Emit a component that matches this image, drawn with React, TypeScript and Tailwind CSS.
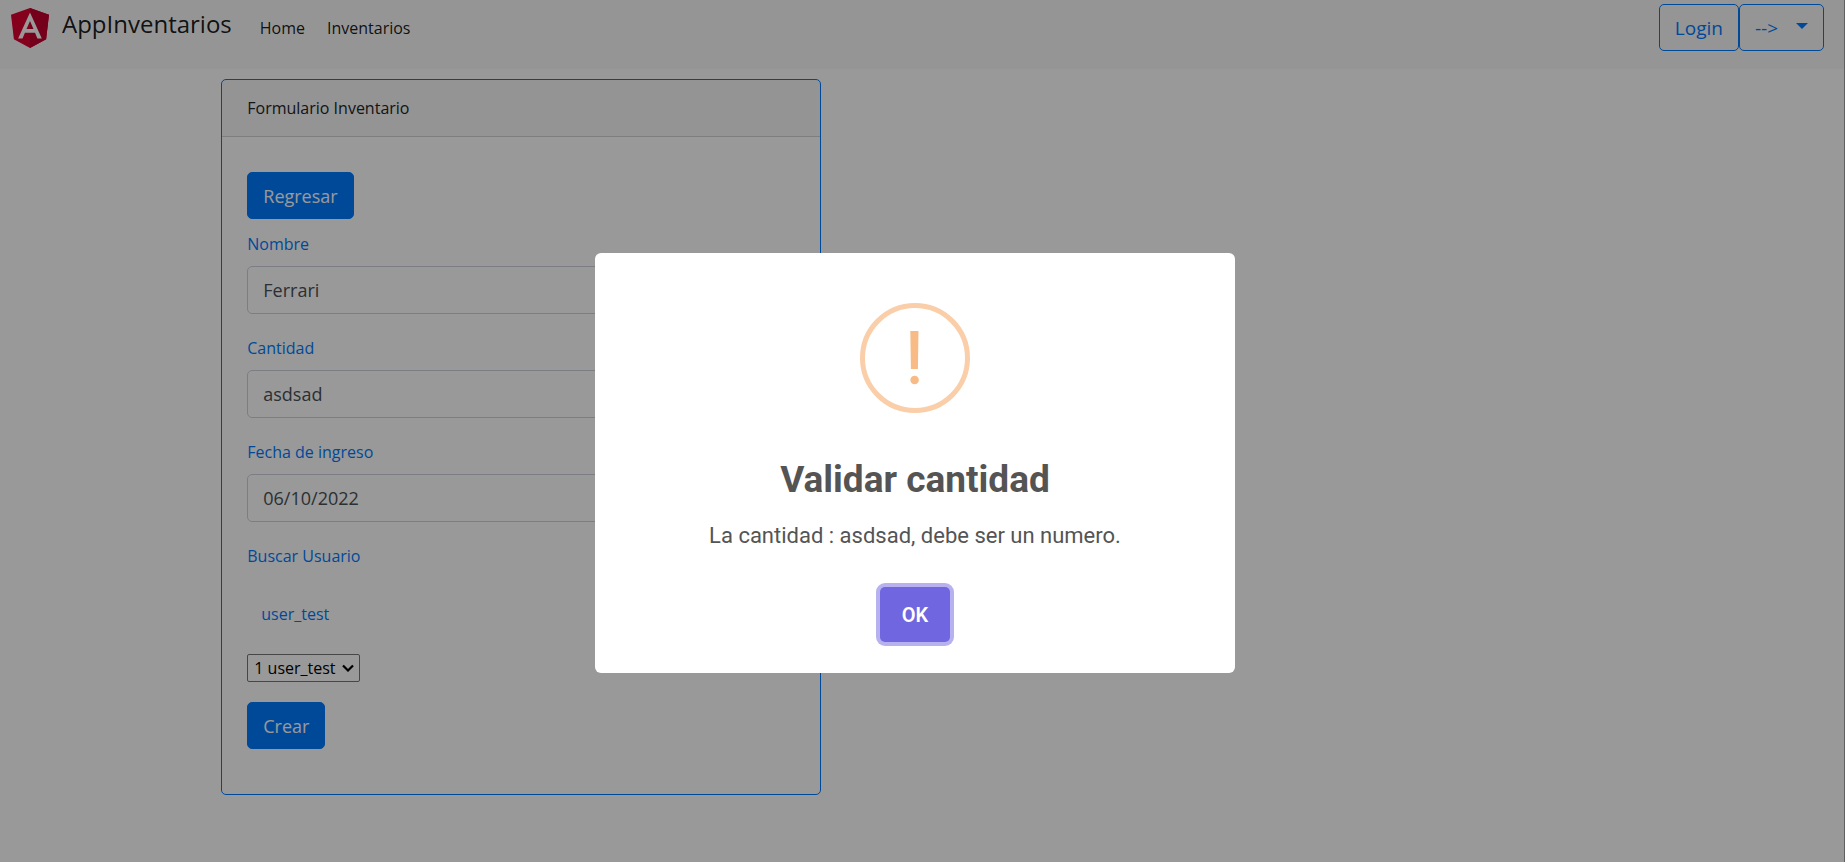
import { useState } from "react";

const buttonBase = "rounded-[5px] border border-[#007bff] px-[15px] pt-px leading-[44px]";
const solidButton = `${buttonBase} block bg-[#007bff] text-[18px] text-white`;
const outlineButton = `${buttonBase} text-[19px] text-[#007bff]`;
const labelBase = "block text-[16px] leading-7 text-[#007bff]";

function AngularLogo() {
  return (
    <svg
      viewBox="31.9 30 172.2 200"
      preserveAspectRatio="none"
      className="mt-0.5 h-10 w-[38px]"
      aria-hidden="true"
    >
      <path fill="#dd0031" d="M118 30 31.9 63.2l13.1 123.1L118 230l73-43.7 13.1-123.1z" />
      <path fill="#c3002f" d="M118 30v200l73-43.7 13.1-123.1z" />
      <path
        fill="#fff"
        d="M118 52.1 64.2 182.6h20l10.8-29.2h45.8l10.8 29.2h20zm15.7 83.3h-31.4l15.7-40.9z"
      />
    </svg>
  );
}

function Navbar() {
  return (
    <nav className="flex h-[69px] items-start bg-[#f8f9fa] pr-5 pl-[11px]">
      <a href="#" className="flex items-start gap-[13px] pt-1.5 text-[24px] leading-9 text-black/90">
        <AngularLogo />
        <span>AppInventarios</span>
      </a>
      <div className="ml-7 flex gap-[22px] pt-3.5 text-[16px] leading-7 text-black/90">
        <a href="#">Home</a>
        <a href="#">Inventarios</a>
      </div>
      <div className="ml-auto flex pt-1">
        <button type="button" className={outlineButton}>Login</button>
        <button type="button" className={`${outlineButton} flex items-center gap-[18px]`}>
          <span>--&gt;</span>
          <svg viewBox="0 0 12 6" className="mb-1 h-1.5 w-3" aria-hidden="true">
            <path d="M0 0h12L6 6z" fill="currentColor" />
          </svg>
        </button>
      </div>
    </nav>
  );
}

function Field({ id, label, initial }: { id: string; label: string; initial: string }) {
  const [value, setValue] = useState(initial);
  return (
    <div className="mb-5">
      <label htmlFor={id} className={labelBase}>{label}</label>
      <input
        id={id}
        type="text"
        value={value}
        onChange={(e) => setValue(e.target.value)}
        className="mt-2 block h-12 w-full rounded-[5px] border border-[#ced4da] bg-white px-[15px] text-[18px] text-[#495057]"
      />
    </div>
  );
}

function InventoryForm() {
  return (
    <section className="mt-2.5 ml-[12%] max-w-[600px] rounded-[5px] border border-[#007bff] bg-white">
      <header className="rounded-t border-b border-black/15 bg-black/[0.03] px-[25px] py-3.5 text-[16px] leading-7 text-[#212529]">
        Formulario Inventario
      </header>
      <form className="px-[25px] pt-[35px] pb-[45px]" onSubmit={(e) => e.preventDefault()}>
        <button type="button" className={`${solidButton} mb-[11px]`}>
          Regresar
        </button>
        <Field id="nombre" label="Nombre" initial="Ferrari" />
        <Field id="cantidad" label="Cantidad" initial="asdsad" />
        <Field id="fecha" label="Fecha de ingreso" initial="06/10/2022" />
        <label htmlFor="usuario" className={labelBase}>Buscar Usuario</label>
        <p className="mt-[30px] px-3.5 text-[16px] leading-7 text-[#007bff]">user_test</p>
        <div className="relative mt-[26px] w-[113px]">
          <select
            id="usuario"
            className="block h-7 w-full appearance-none rounded-xs border border-[#767676] bg-white pl-1.5 text-[16px] leading-6 text-black"
          >
            <option>1 user_test</option>
          </select>
          <svg viewBox="0 0 12 8" className="pointer-events-none absolute top-2.5 right-1.5 h-2 w-3" aria-hidden="true">
            <path d="m1 1.5 5 5 5-5" fill="none" stroke="#000" strokeWidth="2.2" />
          </svg>
        </div>
        <button type="submit" className={`${solidButton} mt-5`}>
          Crear
        </button>
      </form>
    </section>
  );
}

function ValidationDialog() {
  return (
    <div className="fixed inset-0 flex items-center justify-center bg-black/40 pr-[15px]">
      <div
        role="alertdialog"
        aria-labelledby="dialog-title"
        aria-describedby="dialog-text"
        className="mt-16 flex w-full max-w-[640px] flex-col items-center rounded-md bg-white pt-[50px] pb-[31px] font-['Roboto',sans-serif] text-[#545454]"
      >
        <svg viewBox="0 0 110 110" className="h-[110px] w-[110px]" aria-hidden="true">
          <circle cx="55" cy="55" r="52.5" fill="none" stroke="#facea8" strokeWidth="5" />
          <path d="M50.3 28h8.2l-.6 38h-7z" fill="#f8bb86" />
          <circle cx="54.6" cy="77" r="4.3" fill="#f8bb86" />
        </svg>
        <h2 id="dialog-title" className="mt-11 text-[37px] leading-[46px] font-bold">
          Validar cantidad
        </h2>
        <p id="dialog-text" className="mt-[19px] text-[22px] leading-7">
          La cantidad : asdsad, debe ser un numero.
        </p>
        <button
          type="button"
          className="mt-[37px] h-[55px] rounded-[5px] bg-[#7066e0] px-[22px] text-[20px] font-semibold text-white ring-4 ring-[#7066e0]/50"
        >
          OK
        </button>
      </div>
    </div>
  );
}

export default function App() {
  return (
    <div className="min-h-screen border-r border-[#a0a0a0] bg-white font-['Open_Sans',sans-serif]">
      <Navbar />
      <InventoryForm />
      <ValidationDialog />
    </div>
  );
}
